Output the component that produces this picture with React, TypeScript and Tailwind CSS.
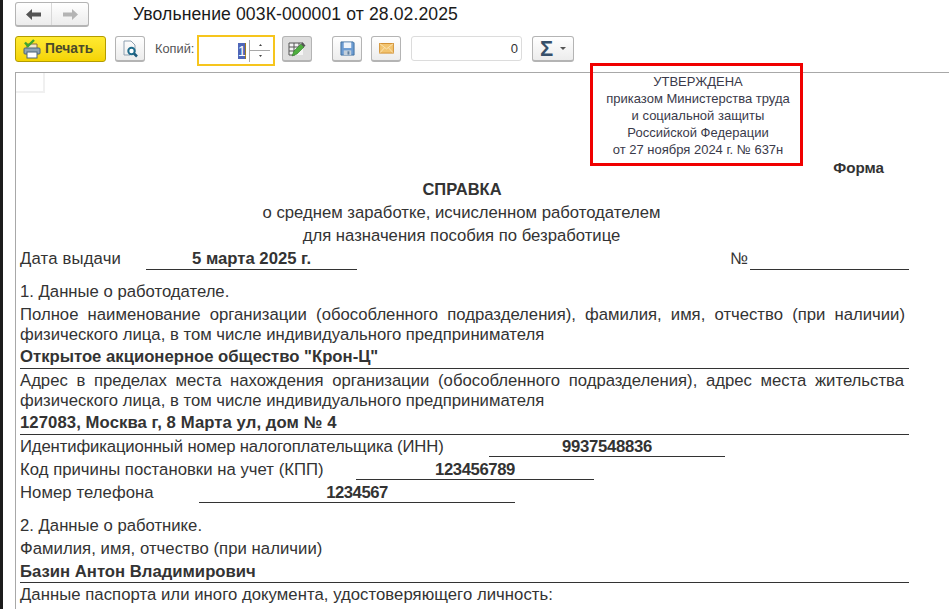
import React from "react";

const Btn = ({ className = "", children }: { className?: string; children?: React.ReactNode }) => (
  <div className={"flex items-center justify-center rounded-[3px] border border-[#b4b4b4] border-b-2 bg-gradient-to-b from-white to-[#ececec] " + className}>{children}</div>
);

const Row = ({ h, className = "", children }: { h: string; className?: string; children?: React.ReactNode }) => (
  <div className={"flex items-center whitespace-nowrap " + h + " " + className}>{children}</div>
);

const Field = ({ w, className = "", children }: { w: string; className?: string; children: React.ReactNode }) => (
  <div className={"flex h-full items-center justify-center border-b border-[#333] pt-px font-bold " + w + " " + className}>{children}</div>
);

export default function App() {
  return (
    <div className="flex h-[609px] w-[949px] overflow-hidden bg-white font-['Liberation_Sans',Arial,sans-serif] text-[#333]">
      <div className="w-[3px] shrink-0 bg-[#1c1c1c]" />
      <div className="flex min-w-0 flex-1 flex-col">
        {/* Title bar */}
        <div className="flex h-[32px] shrink-0 items-start pl-[12px] pt-[2px]">
          <Btn className="h-[25px] w-[74px]">
            <div className="flex h-full w-[37px] items-center justify-center border-r border-[#d8d8d8]">
              <svg width="15" height="11" viewBox="0 0 15 11"><path d="M0 5.5 6 0v3.500h9v4H6V11z" fill="#555" /></svg>
            </div>
            <div className="flex h-full w-[37px] items-center justify-center">
              <svg width="15" height="11" viewBox="0 0 15 11"><path d="M15 5.5 9 0v3.500H0v4h9V11z" fill="#b4b4b4" /></svg>
            </div>
          </Btn>
          <div className="ml-[44px] text-[17.6px] leading-[25px] tracking-[0.1px] text-[#1a1a1a]">Увольнение 003К-000001 от 28.02.2025</div>
        </div>
        {/* Toolbar */}
        <div className="flex h-[40px] shrink-0 items-start pl-[12px] pt-[4px]">
          <div className="flex h-[26px] w-[91px] items-center rounded-[3px] border border-[#b39c00] bg-gradient-to-b from-[#ffea30] to-[#f5d400] pl-[6px]">
            <svg width="20" height="20" viewBox="0 0 20 20">
              <path d="M5 5h10v5H5z" fill="#f4e7c8" stroke="#8a6a3a" />
              <rect x="2" y="9" width="16" height="6" rx="1" fill="#8fa4b4" stroke="#4c6478" />
              <rect x="5" y="13" width="10" height="6" fill="#fff" stroke="#4c6478" />
              <path d="M3 3.500 6 7l6-6" fill="none" stroke="#3fa52e" strokeWidth="2.400" />
            </svg>
            <span className="ml-[3px] text-[13.8px] font-bold text-[#4a4a2a]">Печать</span>
          </div>
          <Btn className="ml-[9px] h-[26px] w-[30px]">
            <svg width="18" height="18" viewBox="0 0 18 18">
              <path d="M3 1h7l4 4v7M3 1v14h6" fill="none" stroke="#8fa0b0" />
              <circle cx="10.500" cy="11" r="3.200" fill="#fff" stroke="#1f6c8c" strokeWidth="2" />
              <path d="m13 13.500 3 3" stroke="#1f5c7c" strokeWidth="2.500" />
            </svg>
          </Btn>
          <span className="ml-[10px] mt-[5px] w-[39px] text-[12.800px] leading-[15px] text-[#555]">Копий:</span>
          <div className="ml-[3px] -mt-[1px] flex h-[31px] w-[78px] items-center justify-end border-[2px] border-[#f6c51d] bg-white">
            <span className="mr-[3px] block h-[16px] w-[8px] border-r border-[#9a7a20] bg-[#4f66b8] text-center text-[14px] leading-[16px] text-white">1</span>
            <div className="mr-[3px] flex h-[22px] w-[21px] flex-col border-l border-[#a8a8a8]">
              <div className="flex h-[11px] items-center justify-center border-b border-[#a8a8a8]">
                <svg width="3" height="2" viewBox="0 0 3 2"><path d="M1.500 0 3 2H0z" fill="#444" /></svg>
              </div>
              <div className="flex h-[11px] items-center justify-center">
                <svg width="3" height="2" viewBox="0 0 3 2"><path d="M1.500 2 3 0H0z" fill="#444" /></svg>
              </div>
            </div>
          </div>
          <div className="ml-[7px] flex h-[26px] w-[30px] items-center justify-center rounded-[3px] border border-[#b4b4b4] border-b-2 bg-[#dedede]">
            <svg width="18" height="18" viewBox="0 0 18 18">
              <rect x="1" y="3" width="14" height="12" fill="#f4f4f4" />
              <path d="M1 3h14M1 7h14M1 11h9M1 15h6M1 3v12M6 3v12M11 3v7M15 3v5" stroke="#555" fill="none" />
              <path d="m4 16 2-5 7-7 3 3-7 7z" fill="#4fae3f" stroke="#2f7a2a" strokeWidth=".6" />
              <path d="m13 4 1.500-1.500 3 3L16 7z" fill="#555" />
            </svg>
          </div>
          <Btn className="ml-[20px] h-[26px] w-[30px]">
            <svg width="15" height="15" viewBox="0 0 16 16">
              <path d="M1 1h13l1 1v13H1z" fill="#6b9bd2" stroke="#3f6f9f" />
              <rect x="4" y="1.500" width="8" height="6" fill="#eef3f9" />
              <rect x="4" y="10" width="8" height="5" fill="#c3cfdb" />
              <rect x="8" y="11" width="2" height="3.500" fill="#5f7f9f" />
            </svg>
          </Btn>
          <Btn className="ml-[9px] h-[26px] w-[30px]">
            <svg width="15" height="11" viewBox="0 0 16 12">
              <rect x=".5" y=".5" width="15" height="10.500" fill="#f2c470" stroke="#d08c2c" />
              <path d="m1 1 7 5.500L15 1M1 10.500l5-5.500M15 10.500l-5-5.500" fill="none" stroke="#fbe5b8" />
            </svg>
          </Btn>
          <div className="ml-[10px] flex h-[25px] w-[111px] items-center justify-end rounded-[3px] border border-[#dcdcdc] pr-[3px] text-[13px] text-[#333]">0</div>
          <Btn className="ml-[10px] h-[26px] w-[42px]">
            <span className="text-[22px] font-bold leading-none text-[#37506a]">Σ</span>
            <svg className="ml-[7px]" width="6" height="3" viewBox="0 0 6 3"><path d="M0 0h6L3 3z" fill="#555" /></svg>
          </Btn>
        </div>
        {/* Document */}
        <div className="relative ml-[12px] flex-1 border-l border-t border-[#a8a8a8] pl-[4px] pr-[40px] text-[16.700px]">
          <div className="absolute left-0 top-0 h-[20px] w-[29px] border-b-2 border-r-2 border-[#f0f0f0]" />
          <div className="absolute left-[574px] top-[-10px] flex h-[103px] w-[213px] flex-col items-center justify-center border-[3px] border-[#f00000] pl-[3px] pt-[2px] text-[13px] leading-[17px] text-[#3a3a4a]">
            <div>УТВЕРЖДЕНА</div>
            <div>приказом Министерства труда</div>
            <div>и социальной защиты</div>
            <div>Российской Федерации</div>
            <div>от 27 ноября 2024 г. № 637н</div>
          </div>
          <div className="h-[85px]" />
          <div className="flex h-[20px] items-center justify-end pr-[25px] text-[15.200px] font-bold">Форма</div>
          <div className="flex h-[23px] items-center justify-center pr-[5px] text-[16.500px] font-bold">СПРАВКА</div>
          <div className="flex h-[23px] items-center justify-center pr-[6px]">о среднем заработке, исчисленном работодателем</div>
          <div className="flex h-[23px] items-center justify-center pr-[6px]">для назначения пособия по безработице</div>
          <Row h="h-[23px]">
            <span className="w-[126px] tracking-[0.18px]">Дата выдачи</span>
            <Field w="w-[211px]">5 марта 2025 г.</Field>
            <span className="ml-[373px] w-[20px]">№</span>
            <div className="h-full w-[159px] border-b border-[#333]" />
          </Row>
          <Row h="h-[22px]" className="mt-[11px]">1. Данные о работодателе.</Row>
          <div className="mt-[2px] pr-[4px] text-justify leading-[20px]">
            Полное наименование организации (обособленного подразделения), фамилия, имя, отчество (при наличии) физического лица, в том числе индивидуального предпринимателя
          </div>
          <Row h="h-[24px]" className="border-b border-[#333] pt-[1px] font-bold">Открытое акционерное общество "Крон-Ц"</Row>
          <div className="pr-[5px] pt-[2px] text-justify leading-[20px]">
            Адрес в пределах места нахождения организации (обособленного подразделения), адрес места жительства физического лица, в том числе индивидуального предпринимателя
          </div>
          <Row h="h-[24px]" className="border-b border-[#333] font-bold tracking-[0.08px]">127083, Москва г, 8 Марта ул, дом № 4</Row>
          <Row h="h-[22px]" className="pt-[2px]">
            <span className="w-[469px] tracking-[-0.13px]">Идентификационный номер налогоплательщика (ИНН)</span>
            <Field w="w-[236px]" className="tracking-[-0.3px]">9937548836</Field>
          </Row>
          <Row h="h-[23px]" className="pt-[2px]">
            <span className="w-[336px] tracking-[0.03px]">Код причины постановки на учет (КПП)</span>
            <Field w="w-[238px]" className="tracking-[-0.4px]">123456789</Field>
          </Row>
          <Row h="h-[23px]" className="pt-[2px]">
            <span className="w-[179px] tracking-[0.07px]">Номер телефона</span>
            <Field w="w-[316px]" className="tracking-[-0.5px]">1234567</Field>
          </Row>
          <Row h="h-[22px]" className="mt-[11px] pt-[2px]">2. Данные о работнике.</Row>
          <Row h="h-[23px]" className="pt-[2px] tracking-[0.05px]">Фамилия, имя, отчество (при наличии)</Row>
          <Row h="h-[24px]" className="border-b border-[#333] pt-[2px] font-bold">Базин Антон Владимирович</Row>
          <Row h="h-[22px]" className="pt-[2px] tracking-[0.05px]">Данные паспорта или иного документа, удостоверяющего личность:</Row>
        </div>
      </div>
    </div>
  );
}
